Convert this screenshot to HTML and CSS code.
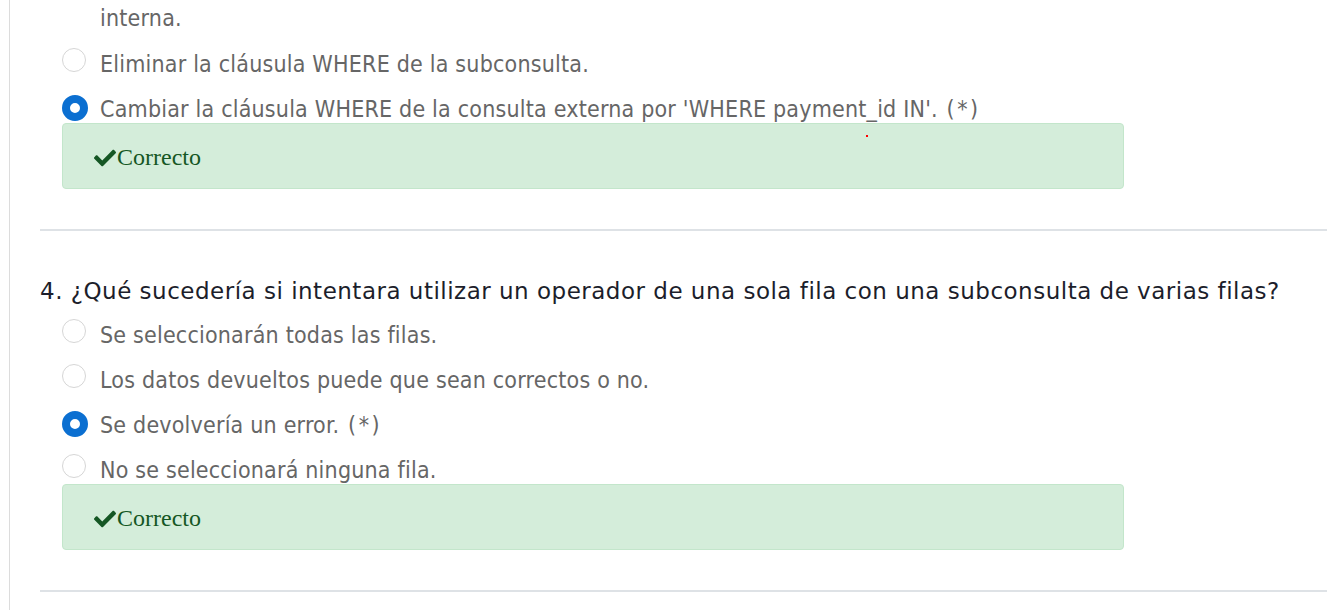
FILE: index.html
```html
<!DOCTYPE html>
<html lang="es">
<head>
<meta charset="utf-8">
<title>Cuestionario</title>
<link rel="stylesheet" href="styles.css">
</head>
<body>
<div class="page">
  <section class="question">
    <div class="options">
      <div class="option-tail">interna.</div>
      <label class="option"><span class="radio"></span><span class="label">Eliminar la cláusula WHERE de la subconsulta.</span></label>
      <label class="option"><span class="radio checked"></span><span class="label">Cambiar la cláusula WHERE de la consulta externa por 'WHERE payment_id IN'. <span class="mark">(*)</span></span></label>
    </div>
    <div class="feedback"><svg class="check" viewBox="0 0 512 512" aria-hidden="true"><path d="M173.898 439.404l-166.4-166.4c-9.997-9.997-9.997-26.206 0-36.204l36.203-36.204c9.997-9.998 26.207-9.998 36.204 0L192 312.69 432.095 72.596c9.997-9.997 26.207-9.997 36.204 0l36.203 36.204c9.997 9.997 9.997 26.206 0 36.204l-294.4 294.401c-9.998 9.997-26.207 9.997-36.204-.001z"/></svg><span>Correcto</span><span class="dot"></span></div>
  </section>
  <hr class="sep">
  <section class="question">
    <h2 class="q-title">4. ¿Qué sucedería si intentara utilizar un operador de una sola fila con una subconsulta de varias filas?</h2>
    <div class="options">
      <label class="option"><span class="radio"></span><span class="label">Se seleccionarán todas las filas.</span></label>
      <label class="option"><span class="radio"></span><span class="label">Los datos devueltos puede que sean correctos o no.</span></label>
      <label class="option"><span class="radio checked"></span><span class="label">Se devolvería un error. <span class="mark">(*)</span></span></label>
      <label class="option"><span class="radio"></span><span class="label">No se seleccionará ninguna fila.</span></label>
    </div>
    <div class="feedback"><svg class="check" viewBox="0 0 512 512" aria-hidden="true"><path d="M173.898 439.404l-166.4-166.4c-9.997-9.997-9.997-26.206 0-36.204l36.203-36.204c9.997-9.998 26.207-9.998 36.204 0L192 312.69 432.095 72.596c9.997-9.997 26.207-9.997 36.204 0l36.203 36.204c9.997 9.997 9.997 26.206 0 36.204l-294.4 294.401c-9.998 9.997-26.207 9.997-36.204-.001z"/></svg><span>Correcto</span></div>
  </section>
  <hr class="sep">
</div>
</body>
</html>
```
FILE: styles.css
```css
html, body {
  margin: 0;
  padding: 0;
  background: #fff;
}
body {
  font-family: "DejaVu Sans", Verdana, sans-serif;
  overflow: hidden;
}
.page {
  margin-left: 9px;
  border-left: 1px solid #dcdcdc;
  padding: 3px 0 0 30px;
  min-height: 610px;
  box-sizing: border-box;
}
.options {
  display: flex;
  flex-direction: column;
  gap: 15px;
  padding-left: 22px;
}
.option-tail,
.option {
  font-family: "DejaVu Sans Condensed", "DejaVu Sans", Tahoma, sans-serif;
  font-stretch: condensed;
  font-size: 23px;
  letter-spacing: 0.2px;
  line-height: 30px;
  color: #666;
}
.option-tail {
  padding-left: 38px;
}
.option {
  display: flex;
  align-items: center;
  gap: 14px;
  height: 30px;
}
.label {
  line-height: 28px;
  padding-top: 2px;
}
.mark {
  letter-spacing: 2.5px;
  margin-left: 2px;
}
.radio {
  width: 24px;
  height: 24px;
  box-sizing: border-box;
  border-radius: 50%;
  border: 1px solid #d6d6d6;
  background: #fff;
  flex: none;
  align-self: flex-start;
}
.radio.checked {
  width: 26px;
  height: 26px;
  margin-right: -2px;
  border: 8.5px solid #0b6fd1;
  align-self: center;
}
.feedback {
  position: relative;
  margin: 0 0 0 22px;
  width: 1062px;
  height: 66px;
  box-sizing: border-box;
  background: #d4edda;
  border: 1px solid #c3e6cb;
  border-radius: 4px;
  padding: 3px 0 0 31px;
  display: flex;
  align-items: center;
  gap: 1px;
  font-family: "Liberation Serif", "Times New Roman", serif;
  font-size: 24px;
  color: #155724;
}
.check {
  width: 22px;
  height: 22px;
  fill: #155724;
}
.dot {
  position: absolute;
  left: 803px;
  top: 11px;
  width: 2px;
  height: 2px;
  background: #f00;
}
.sep {
  margin: 40px 0 0 0;
  border: 0;
  border-top: 2px solid #dee2e6;
  height: 0;
}
.q-title {
  margin: 45px 0 13px 0;
  font-size: 23px;
  letter-spacing: 0.5px;
  font-weight: normal;
  line-height: 30px;
  color: #1c1e2b;
}
```
